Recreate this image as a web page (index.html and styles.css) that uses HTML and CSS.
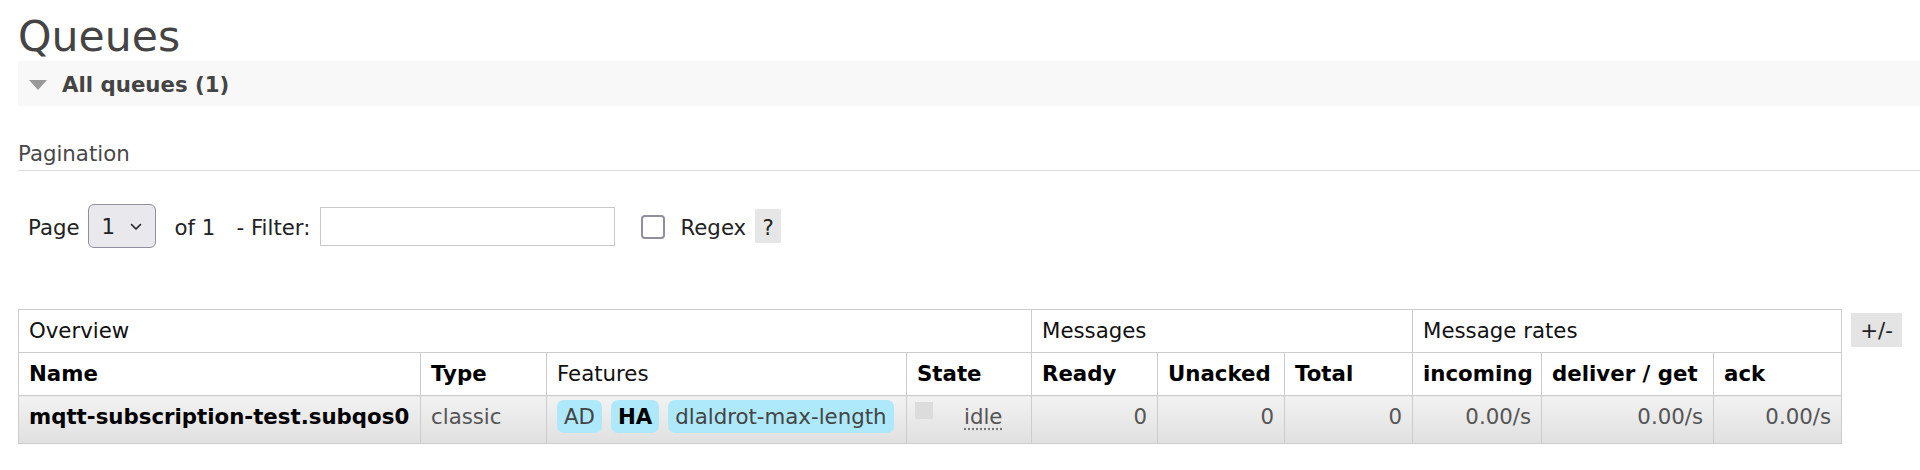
FILE: index.html
```html
<!DOCTYPE html>
<html>
<head>
<meta charset="utf-8">
<title>Queues</title>
<link rel="stylesheet" href="styles.css">
</head>
<body>
<div class="main">
  <h1 class="title">Queues</h1>
  <div class="section">
    <h2 class="section-head"><span class="tri"></span><span>All queues (1)</span></h2>
    <div class="section-body">
      <h3 class="pag-title">Pagination</h3>
      <div class="pag-row">
        <span class="lbl lbl-page">Page</span>
        <span class="select-wrap">
          <select class="page-select"><option>1</option></select>
          <svg class="chev" width="12" height="8" viewBox="0 0 12 8"><path d="M1.5 1.5 L6 6 L10.5 1.5" fill="none" stroke="#222" stroke-width="1.6" stroke-linecap="round" stroke-linejoin="round"/></svg>
        </span>
        <span class="lbl lbl-of">of 1</span>
        <span class="lbl lbl-filter">- Filter:</span>
        <input class="filter" type="text">
        <input class="regex-box" type="checkbox">
        <span class="lbl lbl-regex">Regex</span>
        <span class="help">?</span>
      </div>
      <div class="table-row">
        <table class="list">
          <colgroup>
            <col class="w-name"><col class="w-type"><col class="w-feat"><col class="w-state">
            <col class="w-ready"><col class="w-unack"><col class="w-total">
            <col class="w-in"><col class="w-deliver"><col class="w-ack">
          </colgroup>
          <thead>
            <tr class="group">
              <th colspan="4">Overview</th>
              <th colspan="3">Messages</th>
              <th colspan="3">Message rates</th>
            </tr>
            <tr class="cols">
              <th class="b">Name</th>
              <th class="b">Type</th>
              <th>Features</th>
              <th class="b">State</th>
              <th class="b">Ready</th>
              <th class="b">Unacked</th>
              <th class="b">Total</th>
              <th class="b">incoming</th>
              <th class="b">deliver / get</th>
              <th class="b">ack</th>
            </tr>
          </thead>
          <tbody>
            <tr class="data">
              <td class="qname">mqtt-subscription-test.subqos0</td>
              <td>classic</td>
              <td class="features"><span class="badge">AD</span><span class="badge badge-b">HA</span><span class="badge">dlaldrot-max-length</span></td>
              <td class="state"><span class="sq"></span><abbr class="idle">idle</abbr></td>
              <td class="r">0</td>
              <td class="r">0</td>
              <td class="r">0</td>
              <td class="r">0.00/s</td>
              <td class="r">0.00/s</td>
              <td class="r">0.00/s</td>
            </tr>
          </tbody>
        </table>
        <span class="plusminus">+/-</span>
      </div>
    </div>
  </div>
</div>
</body>
</html>
```
FILE: styles.css
```css
html, body {
  margin: 0;
  padding: 0;
  background: #fff;
}
body {
  font-family: "DejaVu Sans", Verdana, sans-serif;
  font-size: 21.3px;
  color: #484848;
}
.main {
  padding-left: 18px;
}
.title {
  margin: 0;
  padding-top: 12px;
  font-size: 42.6px;
  line-height: 49px;
  font-weight: normal;
  color: #444;
}
.section-head {
  margin: 0;
  height: 45px;
  display: flex;
  align-items: center;
  background: #f8f8f8;
  font-size: 21.3px;
  font-weight: bold;
  color: #444;
  padding-top: 2px;
  box-sizing: border-box;
}
.tri {
  width: 0;
  height: 0;
  margin-left: 11px;
  margin-right: 15px;
  border-left: 9px solid transparent;
  border-right: 9px solid transparent;
  border-top: 10px solid #999;
}
.pag-title {
  margin: 36px 0 0 0;
  padding-bottom: 4px;
  font-size: 21.3px;
  line-height: 24px;
  font-weight: normal;
  color: #484848;
  border-bottom: 1px solid #ddd;
}
.pag-row {
  margin-top: 33px;
  height: 44px;
  display: flex;
  align-items: center;
  color: #222;
}
.lbl {
  line-height: 24px;
  padding-top: 3px;
}
.lbl-page {
  margin-left: 10px;
}
.select-wrap {
  position: relative;
  margin-left: 8px;
  display: block;
  width: 68px;
  height: 44px;
}
.page-select {
  appearance: none;
  -webkit-appearance: none;
  width: 68px;
  height: 44px;
  box-sizing: border-box;
  border: 1px solid #8f8f9d;
  border-radius: 6px;
  background: #e9e9ed;
  font-family: "DejaVu Sans", Verdana, sans-serif;
  font-size: 21.3px;
  color: #222;
  padding: 0 0 0 13px;
  margin: 0;
}
.chev {
  position: absolute;
  left: 42px;
  top: 19px;
  pointer-events: none;
}
.lbl-of {
  margin-left: 19px;
}
.lbl-filter {
  margin-left: 21px;
}
.filter {
  margin: 0 0 0 10px;
  width: 295px;
  height: 39px;
  box-sizing: border-box;
  border: 1px solid #c9c9c9;
  border-radius: 0;
  padding: 0 6px;
  background: #fff;
}
.regex-box {
  appearance: none;
  -webkit-appearance: none;
  margin: 2px 0 0 26px;
  width: 24px;
  height: 24px;
  box-sizing: border-box;
  border: 2px solid #8f8f9d;
  border-radius: 4px;
  background: #fff;
}
.lbl-regex {
  margin-left: 15px;
}
.help {
  margin-left: 9px;
  width: 26px;
  height: 34px;
  background: #e6e6e6;
  display: flex;
  align-items: center;
  justify-content: center;
  padding-top: 2px;
  box-sizing: border-box;
  color: #222;
}
.table-row {
  margin-top: 61px;
  display: flex;
  align-items: flex-start;
}
.list {
  border-collapse: collapse;
  table-layout: fixed;
  width: 1823px;
  flex: none;
}
.w-name { width: 402px; }
.w-type { width: 126px; }
.w-feat { width: 360px; }
.w-state { width: 125px; }
.w-ready { width: 126px; }
.w-unack { width: 127px; }
.w-total { width: 128px; }
.w-in { width: 129px; }
.w-deliver { width: 172px; }
.w-ack { width: 128px; }
.list th, .list td {
  border: 1px solid #ccc;
  padding: 9px 10px;
  line-height: 24px;
  text-align: left;
  white-space: nowrap;
  overflow: hidden;
}
.list th {
  font-weight: normal;
  color: #111;
  background: #fff;
}
.list th.b {
  font-weight: bold;
  color: #000;
}
.list tr.data td {
  padding: 4px 10px 10px 10px;
  line-height: 33px;
  vertical-align: top;
  background: linear-gradient(#f2f2f2, #e0e0e0);
  color: #555;
}
.list tr.data td.qname {
  font-weight: bold;
  color: #000;
}
.list tr.data td.r {
  text-align: right;
}
.list tr.data td.features {
  padding-left: 10px;
}
.badge {
  display: inline-block;
  vertical-align: top;
  height: 33px;
  line-height: 33px;
  padding: 0 7px;
  margin-right: 9px;
  border-radius: 7px;
  background: #aee9fb;
  color: #444;
}
.badge-b {
  font-weight: bold;
  color: #000;
}
.list tr.data td.state {
  padding-left: 8px;
}
.sq {
  display: inline-block;
  vertical-align: top;
  width: 18px;
  height: 17px;
  margin-top: 2px;
  margin-right: 31px;
  background: #dcdcdc;
}
.idle {
  text-decoration: underline dotted #777;
  text-underline-offset: 4px;
  color: #555;
}
.plusminus {
  margin-left: 9px;
  margin-top: 4px;
  width: 51px;
  height: 34px;
  background: #e4e4e4;
  display: flex;
  align-items: center;
  justify-content: center;
  color: #222;
  font-size: 21.3px;
}
```
